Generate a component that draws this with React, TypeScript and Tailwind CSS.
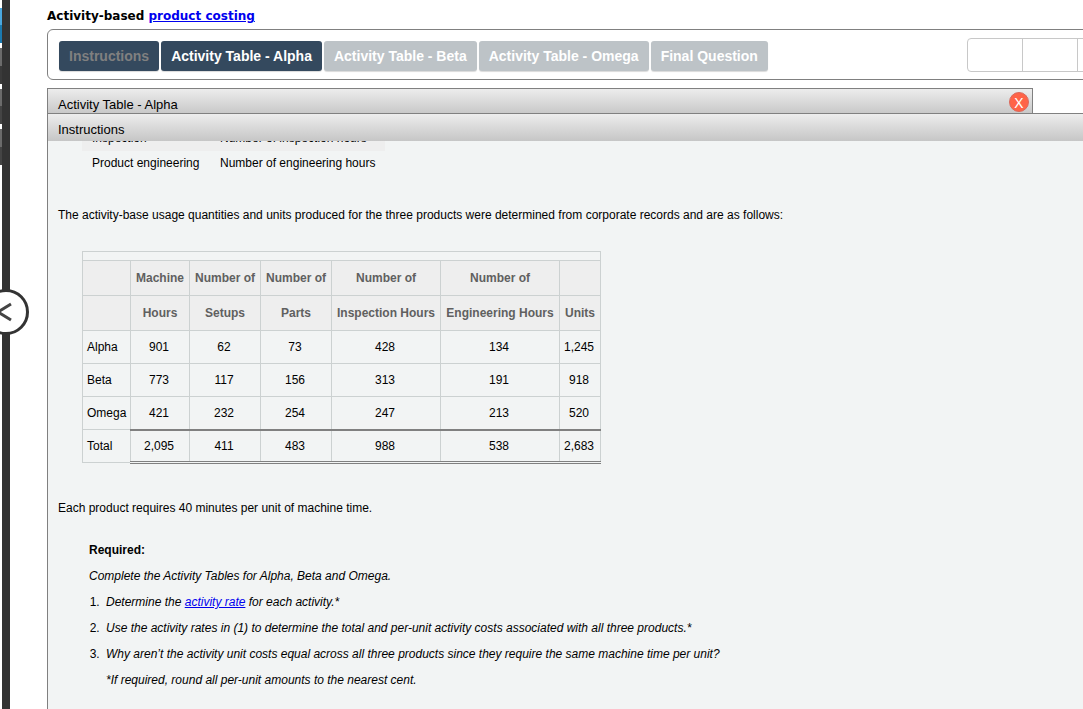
const tabs = [
  { label: 'Instructions', style: 'bg-[#34495e] text-[#808080]' },
  { label: 'Activity Table - Alpha', style: 'bg-[#34495e] text-white' },
  { label: 'Activity Table - Beta', style: 'bg-[#bdc3c7] text-white' },
  { label: 'Activity Table - Omega', style: 'bg-[#bdc3c7] text-white' },
  { label: 'Final Question', style: 'bg-[#bdc3c7] text-white' },
];

const activityBases = [
  { activity: 'Inspection', base: 'Number of inspection hours', style: 'bg-[#eeeeee]' },
  { activity: 'Product engineering', base: 'Number of engineering hours', style: '' },
];

const columnWidths = [
  'w-[48px]',
  'w-[59px]',
  'w-[71px]',
  'w-[71px]',
  'w-[109px]',
  'w-[119px]',
  'w-[41px]',
];

const headerRows = [
  ['', 'Machine', 'Number of', 'Number of', 'Number of', 'Number of', ''],
  ['', 'Hours', 'Setups', 'Parts', 'Inspection Hours', 'Engineering Hours', 'Units'],
];

const products = [
  { name: 'Alpha', values: ['901', '62', '73', '428', '134', '1,245'] },
  { name: 'Beta', values: ['773', '117', '156', '313', '191', '918'] },
  { name: 'Omega', values: ['421', '232', '254', '247', '213', '520'] },
];

const totals = ['2,095', '411', '483', '988', '538', '2,683'];

function SideRail() {
  return (
    <aside className="relative flex w-[10px] shrink-0">
      <div className="flex w-[2px] flex-col gap-[5px] pt-2">
        <div className="h-[35px] bg-linear-to-b from-[#4aa8e0] from-50% to-[#1b7ab0] to-50%" />
        <div className="h-[36px] bg-linear-to-b from-[#6b6b6b] from-50% to-[#3a3a3a] to-50%" />
        <div className="h-[35px] bg-linear-to-b from-[#6b6b6b] from-50% to-[#444444] to-50%" />
        <div className="h-[36px] bg-linear-to-b from-[#6b6b6b] from-50% to-[#444444] to-50%" />
      </div>
      <div className="flex-1 bg-[#333333]" />
      <button
        aria-label="Collapse side panel"
        className="absolute top-[289px] left-[-17px] size-[46px] rounded-full border-[3px] border-[#333333] bg-white"
      >
        <svg viewBox="0 0 40 40" className="size-[40px]" fill="none" stroke="#444444" strokeWidth="3">
          <path d="M25 12 L12 20 L25 28" />
        </svg>
      </button>
    </aside>
  );
}

function Toolbar() {
  return (
    <div className="mr-[-10px] flex items-center justify-between rounded-md border border-[#808080] px-[11px] pt-2 pb-[7px]">
      <nav className="flex gap-[2px] pt-[2px]">
        {tabs.map((tab) => (
          <button
            key={tab.label}
            className={`h-[30px] rounded-[3px] px-[10px] text-[14px] font-bold whitespace-nowrap shadow-[0_1px_1px_rgba(0,0,0,0.15)] ${tab.style}`}
          >
            {tab.label}
          </button>
        ))}
      </nav>
      <div className="mr-[-24px] flex h-[34px] w-[138px] shrink-0 rounded-[4px] border border-[#c8c8c8]">
        <div className="w-[55px] border-r border-[#c8c8c8]" />
        <div className="w-[55px] border-r border-[#c8c8c8]" />
      </div>
    </div>
  );
}

function UsageTable() {
  return (
    <table className="mt-7 ml-[34px] w-[519px] table-fixed border-collapse text-center">
      <colgroup>
        {columnWidths.map((width, i) => (
          <col key={i} className={width} />
        ))}
      </colgroup>
      <thead>
        <tr className="h-[9px]">
          <td colSpan={7} className="border border-[#ccd1d1] p-0" />
        </tr>
        {headerRows.map((row, r) => (
          <tr key={r} className="h-[35px] bg-[#eeeeee] text-[#606060]">
            {row.map((cell, i) => (
              <th key={i} scope="col" className="border border-[#ccd1d1] p-0 font-bold whitespace-nowrap">
                {cell}
              </th>
            ))}
          </tr>
        ))}
      </thead>
      <tbody>
        {products.map((product) => (
          <tr key={product.name} className="h-[33px]">
            <th scope="row" className="border border-[#ccd1d1] p-0 pl-1 text-left font-normal">
              {product.name}
            </th>
            {product.values.map((value, i) => (
              <td key={i} className="border border-[#ccd1d1] p-0 pr-[2px]">
                {value}
              </td>
            ))}
          </tr>
        ))}
        <tr className="h-[33px]">
          <th scope="row" className="border border-[#ccd1d1] p-0 pl-1 text-left font-normal">
            Total
          </th>
          {totals.map((value, i) => (
            <td
              key={i}
              className="border border-t-2 border-b-3 border-[#ccd1d1] border-t-[#808080] border-b-[#808080] p-0 pr-[2px] [border-bottom-style:double]"
            >
              {value}
            </td>
          ))}
        </tr>
      </tbody>
    </table>
  );
}

export default function App() {
  return (
    <div className="flex h-screen overflow-hidden bg-white font-['Liberation_Sans',Arial,sans-serif] text-black">
      <SideRail />
      <main className="ml-[37px] flex min-w-0 flex-1 flex-col">
        <h1 className="pt-2 pb-[5px] font-['DejaVu_Sans',Verdana,sans-serif] text-[12px] leading-4 font-bold">
          Activity-based{' '}
          <a href="#product-costing" className="text-[#0000ee] underline">
            product costing
          </a>
        </h1>
        <Toolbar />

        <div className="mt-2 mr-[50px] flex h-[25px] items-center justify-between border border-b-0 border-[#808080] bg-linear-to-b from-[#ededed] to-[#c9c9c9] pr-[3px] pl-[10px]">
          <h2 className="pt-[7px] text-[13px]">Activity Table - Alpha</h2>
          <button
            aria-label="Close"
            className="mt-[2px] size-5 rounded-full border border-[#d9695c] bg-[#ff6347] font-['Noto_Sans',sans-serif] text-[15px] leading-4 text-white"
          >
            X
          </button>
        </div>

        <section className="flex min-h-0 flex-1 flex-col border-t border-l border-[#808080] bg-[#f2f4f4] text-[12px] leading-4">
          <h2 className="flex h-[27px] shrink-0 items-center bg-linear-to-b from-[#ededed] to-[#c6c6c6] pt-[5px] pl-[10px] text-[13px]">
            Instructions
          </h2>

          {/* scrolled so only the last rows of the list are visible */}
          <div className="flex h-[35px] shrink-0 flex-col justify-end overflow-hidden pl-[34px]">
            <table className="w-[303px] shrink-0 table-fixed">
              <tbody>
                {activityBases.map((row) => (
                  <tr key={row.activity} className={`h-[25px] ${row.style}`}>
                    <td className="w-[128px] p-0 pb-[2px] pl-[10px]">{row.activity}</td>
                    <td className="p-0 pb-[2px] pl-[10px]">{row.base}</td>
                  </tr>
                ))}
              </tbody>
            </table>
          </div>

          <p className="mt-[31px] pl-[10px]">
            The activity-base usage quantities and units produced for the three products were determined from
            corporate records and are as follows:
          </p>
          <UsageTable />
          <p className="mt-9 pl-[10px]">Each product requires 40 minutes per unit of machine time.</p>

          <div className="mt-[21px] ml-[41px] leading-[26px]">
            <h3 className="font-bold">Required:</h3>
            <p className="italic">Complete the Activity Tables for Alpha, Beta and Omega.</p>
            <ol className="list-decimal pl-[14px]">
              <li className="pl-[3px]">
                <em>
                  Determine the{' '}
                  <a href="#activity-rate" className="text-[#0000ee] underline">
                    activity rate
                  </a>{' '}
                  for each activity.*
                </em>
              </li>
              <li className="pl-[3px]">
                <em>
                  Use the activity rates in (1) to determine the total and per-unit activity costs associated with
                  all three products.*
                </em>
              </li>
              <li className="pl-[3px]">
                <em>
                  Why aren’t the activity unit costs equal across all three products since they require the same
                  machine time per unit?
                </em>
              </li>
            </ol>
            <p className="pl-[17px] italic">*If required, round all per-unit amounts to the nearest cent.</p>
          </div>
        </section>
      </main>
    </div>
  );
}
